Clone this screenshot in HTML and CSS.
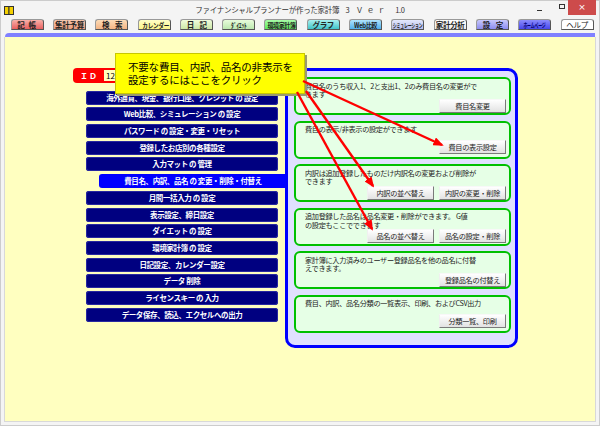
FILE: index.html
```html
<!DOCTYPE html>
<html lang="ja">
<head>
<meta charset="utf-8">
<title>家計簿</title>
<link rel="stylesheet" href="styles.css">
</head>
<body>
<div class="window">
  <div class="titlebar">
    <svg class="appicon" width="10" height="9" viewBox="0 0 10 9">
      <rect x="0.5" y="0.5" width="4.5" height="8" fill="#f4d000" stroke="#333" stroke-width="1"/>
      <rect x="5" y="0.5" width="4.5" height="8" fill="#f4d000" stroke="#333" stroke-width="1"/>
    </svg>
    <div class="title">ファイナンシャルプランナーが作った家計簿 3 <span class="ver">Ｖｅｒ</span> 1.0</div>
    <div class="controls">
      <span class="ctl-min"></span>
      <span class="ctl-max"></span>
      <span class="ctl-close">×</span>
    </div>
  </div>

  <div class="tabs">
    <div class="tab tab-kicho">記 帳</div>
    <div class="tab tab-shukei">集計予算</div>
    <div class="tab tab-kensaku">検　索</div>
    <div class="tab tab-cal"><span class="squeeze">カレンダー</span></div>
    <div class="tab tab-nikki">日　記</div>
    <div class="tab tab-diet"><span class="squeeze">ﾀﾞｲｴｯﾄ</span></div>
    <div class="tab tab-kankyo"><span class="squeeze2">環境家計簿</span></div>
    <div class="tab tab-graph">グラフ</div>
    <div class="tab tab-web"><span class="squeeze2">Web比較</span></div>
    <div class="tab tab-sim"><span class="squeeze3">シミュレーション</span></div>
    <div class="tab tab-bunseki">家計分析</div>
    <div class="tab tab-settei">設　定</div>
    <div class="tab tab-home"><span class="squeeze3">ホームページ</span></div>
    <div class="tab tab-help">ヘルプ</div>
  </div>
  <div class="band"></div>

  <div class="content">
    <div class="leftcol">
      <div class="idbox"><span class="idlabel">ＩＤ</span><span class="idinput">12</span></div>
      <ul class="menu">
        <li class="mitem">海外通貨、現金、銀行口座、クレジット の 設定</li>
        <li class="mitem">Web比較、シミュレーション の 設定</li>
        <li class="mitem">パスワード の 設定・変更・リセット</li>
        <li class="mitem">登録したお店別の各種設定</li>
        <li class="mitem">入力マット の 管理</li>
        <li class="mitem mitem-sel">費目名、内訳、品名 の 変更・削除・付替え</li>
        <li class="mitem">月間一括入力 の 設定</li>
        <li class="mitem">表示設定、締日設定</li>
        <li class="mitem">ダイエット の 設定</li>
        <li class="mitem">環境家計簿 の 設定</li>
        <li class="mitem">日記設定、カレンダー設定</li>
        <li class="mitem">データ 削除</li>
        <li class="mitem">ライセンスキー の 入力</li>
        <li class="mitem">データ保存、読込、エクセルへの出力</li>
      </ul>
    </div>

    <div class="panel">
      <div class="gbox">
        <div class="gtext">費目名のうち収入1、2と支出1、2のみ費目名の変更がで<br>きます</div>
        <div class="brow"><span class="btn">費目名変更</span></div>
      </div>
      <div class="gbox">
        <div class="gtext">費目の表示/非表示の設定ができます</div>
        <div class="brow"><span class="btn">費目の表示設定</span></div>
      </div>
      <div class="gbox">
        <div class="gtext">内訳は追加登録したものだけ内訳名の変更および削除が<br>できます</div>
        <div class="brow"><span class="btn">内訳の並べ替え</span><span class="btn">内訳の変更・削除</span></div>
      </div>
      <div class="gbox">
        <div class="gtext">追加登録した品名は品名変更・削除ができます。 G値<br>の設定もここでできます</div>
        <div class="brow"><span class="btn">品名の並べ替え</span><span class="btn">品名の設定・削除</span></div>
      </div>
      <div class="gbox">
        <div class="gtext">家計簿に入力済みのユーザー登録品名を他の品名に付替<br>えできます。</div>
        <div class="brow"><span class="btn">登録品名の付替え</span></div>
      </div>
      <div class="gbox">
        <div class="gtext">費目、内訳、品名分類の一覧表示、印刷、およびCSV出力</div>
        <div class="brow"><span class="btn">分類一覧、印刷</span></div>
      </div>
    </div>
  </div>

  <div class="callout">不要な費目、内訳、品名の非表示を<br>設定するにはここをクリック</div>

  <svg class="arrows" width="600" height="426" viewBox="0 0 600 426">
    <defs>
      <marker id="ah" markerWidth="4.4" markerHeight="3.6" refX="3.6" refY="1.8" orient="auto" markerUnits="strokeWidth">
        <path d="M0,0 L4.4,1.8 L0,3.6 z" fill="#ff0000"/>
      </marker>
    </defs>
    <line x1="303" y1="81" x2="442" y2="145" stroke="#ff0000" stroke-width="2.4" marker-end="url(#ah)"/>
    <line x1="306" y1="91" x2="373" y2="186" stroke="#ff0000" stroke-width="2.4" marker-end="url(#ah)"/>
    <line x1="297" y1="92" x2="372" y2="229" stroke="#ff0000" stroke-width="2.4" marker-end="url(#ah)"/>
  </svg>
</div>
</body>
</html>
```

FILE: styles.css
```css
* { box-sizing: border-box; margin: 0; padding: 0; }
html, body { width: 600px; height: 426px; overflow: hidden; }
body {
  background: #f4f4f4;
  font-family: "Noto Sans CJK JP", "Noto Sans", sans-serif;
  color: #222;
}
.window {
  position: relative;
  width: 600px;
  height: 426px;
  background: #f4f4f4;
  box-shadow: inset 0 0 0 1px #cccccc;
}

/* title bar */
.titlebar {
  height: 19px;
  display: grid;
  grid-template-columns: 1fr auto 1fr;
  align-items: start;
}
.appicon { margin: 6px 0 0 4px; display: block; }
.title {
  font-size: 7.5px;
  letter-spacing: -0.3px;
  word-spacing: 5px;
  line-height: 12px;
  padding-top: 4px;
  color: #333;
  white-space: nowrap;
}
.ver { letter-spacing: 3.5px; }
.controls {
  justify-self: end;
  display: flex;
  align-items: flex-start;
  margin-right: 4px;
}
.ctl-min { width: 5px; height: 1px; background: #333; margin-top: 10px; margin-right: 17px; }
.ctl-max { width: 6px; height: 5px; border: 1px solid #333; margin-top: 4px; margin-right: 3px; }
.ctl-close {
  width: 28px; height: 15px;
  background: #cd4b4b;
  color: #fff;
  font-family: "DejaVu Sans", sans-serif;
  font-size: 9px;
  line-height: 14px;
  text-align: center;
}

/* tabs */
.tabs {
  display: flex;
  gap: 9.3px;
  padding-left: 10.7px;
  height: 11px;
}
.tab {
  width: 33px;
  height: 11px;
  border: 1px solid #999;
  border-right-color: #555;
  border-bottom-color: #555;
  border-radius: 3px 3px 0 0;
  font-size: 7.5px;
  font-weight: bold;
  letter-spacing: -0.3px;
  line-height: 9px;
  text-align: center;
  white-space: nowrap;
  overflow: hidden;
  color: #222;
}
.squeeze { display: inline-block; font-size: 7px; transform: scaleX(0.8); }
.squeeze2 { display: inline-block; font-size: 7px; transform: scaleX(0.85); letter-spacing: -0.4px; }
.squeeze3 { display: inline-block; font-size: 6.5px; transform: scaleX(0.6); transform-origin: center; margin: 0 -20px; }
.tab-kicho { background: linear-gradient(#f8b0a8, #e86060); letter-spacing: 1px; }
.tab-shukei { background: linear-gradient(#f8c8b0, #ec9c7c); }
.tab-kensaku { background: linear-gradient(#fcdcb8, #f4b484); letter-spacing: -1px; }
.tab-cal { background: linear-gradient(#ffffc8, #fcf488); }
.tab-nikki { background: linear-gradient(#f0fcdc, #cce8a8); letter-spacing: -1px; }
.tab-diet { background: linear-gradient(#e8fcdc, #bce8b0); }
.tab-kankyo { background: linear-gradient(#a8fca8, #5ce85c); }
.tab-graph { background: linear-gradient(#a8f0f0, #40c4c8); }
.tab-web { background: linear-gradient(#b0e4fc, #50b0ec); }
.tab-sim { background: linear-gradient(#e4e8fc, #b4bcec); }
.tab-bunseki { background: linear-gradient(#ffffff, #ececec); }
.tab-settei { background: linear-gradient(#c8c8fc, #8c8cf0); letter-spacing: -1px; }
.tab-home { background: linear-gradient(#8c8cfc, #4848ec); color: #000070; text-decoration: underline; }
.tab-help { background: #ffffff; font-weight: normal; }

.band {
  height: 4px;
  margin: 3px 5px 0 5px;
  background: #8080ff;
  border-top-left-radius: 4px;
}

/* content */
.content {
  margin-left: 4px;
  width: 592px;
  height: 385px;
  border: 1px solid #d8d8d8;
  border-top: none;
  background: #ffffc0;
  padding: 31px 0 0 68px;
  display: flex;
  align-items: flex-start;
  gap: 7px;
}
.leftcol { width: 205px; flex: none; }
.idbox {
  width: 60px;
  height: 15px;
  background: #ff0000;
  border-radius: 4px;
  display: flex;
  align-items: center;
  padding-left: 7px;
  gap: 6px;
}
.idlabel { color: #fff; font-size: 8px; font-weight: bold; letter-spacing: 1px; line-height: 10px; }
.idinput {
  flex: 1;
  height: 11px;
  margin-right: 3px;
  background: #ffffc0;
  font-size: 8px;
  line-height: 11px;
  padding-left: 2px;
  color: #000;
}
.menu {
  list-style: none;
  margin-top: 7.7px;
  display: flex;
  flex-direction: column;
  gap: 2.7px;
}
.mitem {
  margin-left: 13px;
  width: 192px;
  height: 14px;
  background: #000080;
  border-radius: 3px;
  box-shadow: inset 0 0 0 1px #2828a0;
  color: #fff;
  font-size: 7.5px;
  font-weight: bold;
  letter-spacing: -0.4px;
  line-height: 14px;
  text-align: center;
  white-space: nowrap;
}
.mitem-sel {
  margin-left: 26px;
  width: 188px;
  background: #0000ff;
  box-shadow: none;
  border-radius: 3px 0 0 3px;
  position: relative;
  z-index: 1;
}

/* right panel */
.panel {
  width: 233px;
  height: 280px;
  flex: none;
  border: 3px solid #0000ff;
  border-radius: 10px;
  background: #e0e0ff;
  padding: 6px 4px 0 6px;
  display: flex;
  flex-direction: column;
  gap: 5.6px;
}
.gbox {
  height: 38px;
  border: 2px solid #00c000;
  border-radius: 6px;
  background: #e6ffe6;
  padding: 2px 3px 3px 9px;
  display: flex;
  flex-direction: column;
}
.gtext {
  font-size: 7.2px;
  letter-spacing: -0.35px;
  line-height: 8.5px;
  color: #222;
  white-space: nowrap;
  padding-top: 0.5px;
}
.brow {
  margin-top: auto;
  display: flex;
  justify-content: flex-end;
  gap: 5px;
}
.btn {
  width: 67px;
  height: 14px;
  background: linear-gradient(#ffffff, #e2e2e2);
  border: 1px solid;
  border-color: #f8f8f8 #7a7a7a #7a7a7a #f0f0f0;
  font-size: 7.2px;
  letter-spacing: -0.3px;
  line-height: 12px;
  text-align: center;
  white-space: nowrap;
  color: #222;
}

/* overlays */
.callout {
  position: absolute;
  left: 115px;
  top: 53px;
  width: 190px;
  height: 41px;
  background: #ffff00;
  border: 1px solid #c8c800;
  box-shadow: 2px 2px 0 #9a9a70;
  font-size: 10.5px;
  letter-spacing: -0.2px;
  line-height: 12.5px;
  padding: 7px 0 0 12px;
  color: #000;
  white-space: nowrap;
}
.arrows {
  position: absolute;
  left: 0;
  top: 0;
  pointer-events: none;
}
```
